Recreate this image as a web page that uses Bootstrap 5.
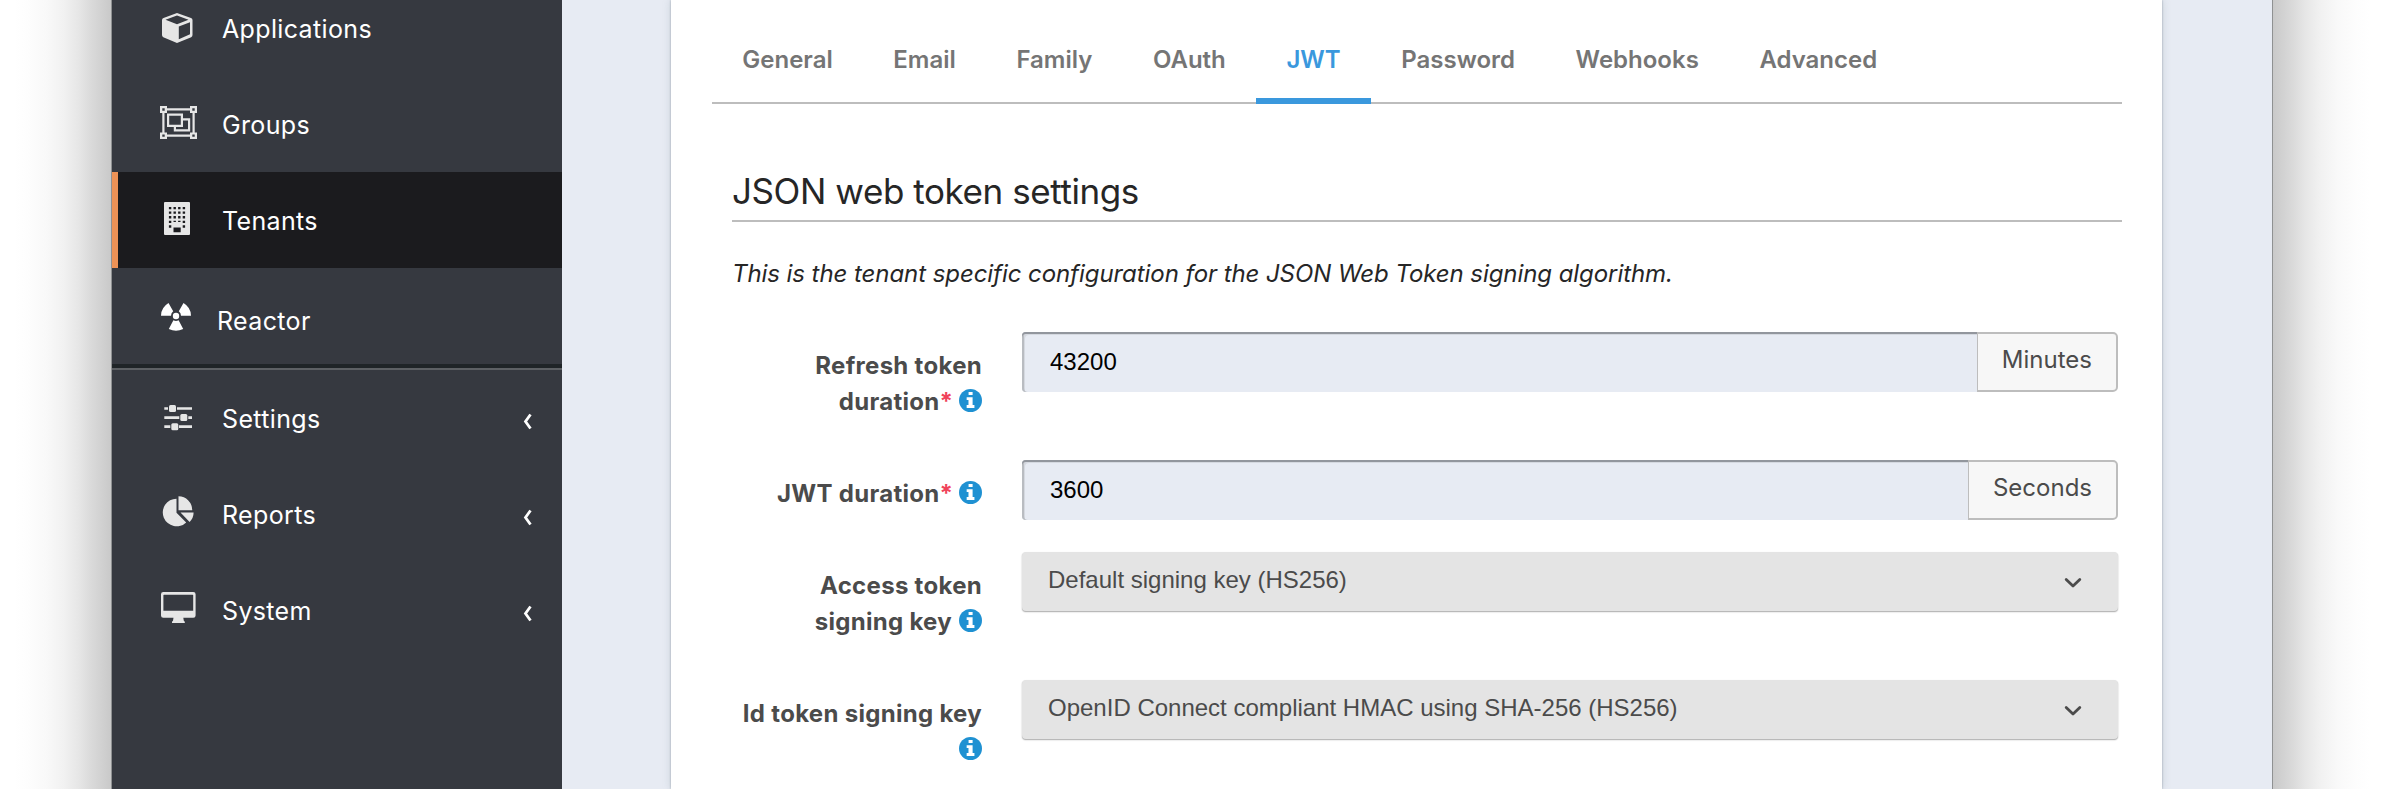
<!DOCTYPE html>
<html lang="en">
<head>
<meta charset="utf-8">
<meta name="viewport" content="width=device-width, initial-scale=1">
<title>Tenants</title>
<link href="https://cdn.jsdelivr.net/npm/bootstrap@5.3.0/dist/css/bootstrap.min.css" rel="stylesheet">
<style>
body{font-family:Inter,"Liberation Sans",sans-serif;font-size:24px;line-height:36px;color:#262626;background:#fff}
.app{height:789px}
.edge{width:112px;background:linear-gradient(to left,#8f9192 0,#8f9192 1px,#c9c9c9 1px,#cfcfcf 8px,#dadada 21px,#e6e6e6 33px,#f1f1f1 48px,#f9f9f9 66px,#fdfdfd 84px,#fff 98px)}
.edge-right{transform:scaleX(-1)}
.side{width:450px;background:#363940}
.side-nav{margin-top:-20px}
.side-link{height:96px;padding:0 27px 0 46px;color:#fff;font-size:25px;letter-spacing:.35px;text-decoration:none}
.side-link:hover{color:#fff}
.side-link svg{width:40px;height:40px;margin-right:24px;fill:#e6e6e6;flex:none}
.side-link .lbl{line-height:96px;padding-top:2px}
.side-link .chev{width:20px;height:24px;margin:8px 0 0;fill:none;stroke:#fff;stroke-width:2.8}
.side-link.active{background:#1b1b1e;border-left:6px solid #ed9256;padding-left:40px}
.side-link.plugin svg{fill:#fff;margin-right:19px}
.side-link.plugin .lbl{padding-top:10px}
.split{height:6px;background:#1f2427;border-bottom:2px solid #5d6064}
.main{background:#e7ebf3;padding:0 110px 0 109px}
.panel{background:#fff;padding:0 40px 0 41px;box-shadow:0 0 2px #9aa3ab,0 0 8px rgba(120,135,150,.28)}
.tabs{border-bottom:2px solid #bdbdbd;height:104px}
.tabs .nav-link{padding:42px 30.3px 20px;color:#757575;font-weight:600;line-height:36px;letter-spacing:0;border-bottom:6px solid transparent;height:104px}
.tabs .nav-link.active{color:#3a98dd;border-color:#3a98dd}
.section{padding-left:20px}
.section h2{margin:65px 0 34px;padding-bottom:7px;font-size:35px;line-height:44px;font-weight:400;letter-spacing:-.42px;border-bottom:2px solid #bdbdbd;color:#262626}
.intro{margin-bottom:40px;letter-spacing:-.07px}
.field{margin-right:4px;gap:40px;height:128px}
.field.short{height:92px}
.field label{width:250px;padding-top:16px;text-align:right;font-weight:700;letter-spacing:.3px;color:#4b4b4b;white-space:nowrap}
.req{color:#f0435a;letter-spacing:-1px}
.info{width:23px;height:23px;margin-left:1px;vertical-align:-2px}
.field .input-group{height:60px;flex:1}
.field .form-control{font:24px "Liberation Sans",sans-serif;color:#000;background:#e7ebf3;border:0;border-radius:4px 0 0 4px;padding:0 27px 0 28px;box-shadow:inset 0 2px #92969d,inset 2px 0 #b9bcc1,inset 3px 3px #d5d9e0}
.field .input-group-text{font-size:24px;line-height:36px;color:#4b4b4b;background:#f7f7f7;border:2px solid #bdbdbd;border-left-width:1px;border-radius:0 5px 5px 0;padding:0 24px 4px;margin-left:0!important}
.picker{height:59px;flex:1;background:#e4e4e4;border:0;border-radius:4px;padding:0 36px 4px 26px;font:24px/36px "Liberation Sans",sans-serif;color:#4b4b4b;box-shadow:0 1px 1px #b4b4b4,0 1px 2px rgba(0,0,0,.15)}
.picker svg{width:18px;height:12px;margin-top:7px;fill:none;stroke:#4b4b4b;stroke-width:2.8;stroke-linecap:round;stroke-linejoin:round}
</style>
</head>
<body class="overflow-hidden">
<svg class="d-none">
  <symbol id="info" viewBox="0 0 24 24"><circle cx="12" cy="12" r="12" fill="#1f91d2"/><path fill="#fff" d="M10 3h4.200v3.200H10zM8 8.500h6.200v8.300h1.900v3H8v-3h1.900v-5.300H8z"/></symbol>
  <symbol id="left" viewBox="0 0 20 24"><path d="M15.500 4.500 10.500 11.500 15.500 18.500"/></symbol>
  <symbol id="down" viewBox="0 0 18 12"><path d="M2.200 2.500 9 9 15.800 2.500"/></symbol>
</svg>
<div class="app d-flex">
  <div class="edge"></div>

  <aside class="side flex-shrink-0 overflow-hidden">
    <nav class="side-nav d-flex flex-column">
      <a class="side-link d-flex align-items-center" href="#">
        <svg viewBox="158 8 40 40"><path fill-rule="evenodd" d="M177 13 191 18q1.500.6 1.500 2v15q0 1.500-1.300 2.200L177 43 163.300 37.200q-1.300-.7-1.300-2.200V20q0-1.400 1.500-2zM177 15.500 165.500 19.700 177 24.200 188.500 19.700zM178.800 26.500V39.300L190 34.200V22.200z"/></svg>
        <span class="lbl">Applications</span>
      </a>
      <a class="side-link d-flex align-items-center" href="#">
        <svg viewBox="158 104 40 40"><path fill-rule="evenodd" d="M160 106h7v2.300h23V106h7v7h-2.300v19.500h2.300v6.500h-7v-2.300h-23v2.300h-7v-6.500h2.300V113H160zM162.300 108.300v2.400h2.400v-2.400zM192.300 108.300v2.400h2.400v-2.400zM162.300 134.500v2.300h2.400v-2.300zM192.300 134.500v2.300h2.400v-2.300zM167 110.500v2.500h-2.500v19.500h2.500v2h23v-2h2.500V113H190v-2.500z"/><path fill-rule="evenodd" d="M167 113.500h16v4.800h7.200v13.200h-16.400v-4.500H167zM169.200 115.700v9.100h11.600v-9.100zM183 120.500V127h-7v2.300h12v-8.800z"/></svg>
        <span class="lbl">Groups</span>
      </a>
      <a class="side-link active d-flex align-items-center" href="#">
        <svg viewBox="158 200 40 40"><rect x="164" y="202" width="26" height="33" rx="1"/><path d="M170.100 207v17.500M174.700 207v15M179.300 207v15M183.900 207v17.500" stroke="#1b1b1e" stroke-width="2.400" stroke-dasharray="2.300 2.250"/><path d="M168.900 225.300h2.400v2.400h-2.400zM182.700 225.300h2.400v2.400h-2.400zM173.500 227.500h7.200v4.800h-7.200z" fill="#1b1b1e"/></svg>
        <span class="lbl">Tenants</span>
      </a>
      <a class="side-link plugin d-flex align-items-center" href="#">
        <svg viewBox="158 296 40 40"><circle cx="176" cy="316" r="3.200"/><path d="M161 315.800Q161 307.500 168.500 303L173.200 311.300Q171 313 171 315.800zM191 315.800Q191 307.500 183.500 303L178.800 311.300Q181 313 181 315.800zM173.400 320.300Q176 321.500 178.600 320.300L183.200 328.900Q176 332.500 168.800 328.900z"/></svg>
        <span class="lbl">Reactor</span>
      </a>
      <div class="split"></div>
      <a class="side-link d-flex align-items-center" href="#">
        <svg viewBox="158 398 40 40"><path d="M164.300 407.200h3.700v2.600h-3.700zM177 407.200h15v2.600h-15zM164.300 416.300h15v2.600h-15zM188.300 416.300h3.700v2.600h-3.700zM164.300 425.300h6v2.600h-6zM179 425.300h13v2.600h-13z"/><rect x="169" y="405" width="7" height="7" rx="1.500"/><rect x="180.300" y="414.100" width="7" height="7" rx="1.500"/><rect x="171.300" y="423.200" width="7" height="7" rx="1.500"/></svg>
        <span class="lbl">Settings</span><svg class="chev ms-auto"><use href="#left"/></svg>
      </a>
      <a class="side-link d-flex align-items-center" href="#">
        <svg viewBox="158 494 40 40"><path d="M176.500 498.700V512.700L186.200 522.400A13.800 13.800 0 1 1 176.500 498.700zM178.500 496.300A13.700 13.700 0 0 1 192.200 510.300H178.500zM180.500 512.500H193.600A13 13 0 0 1 189.600 521.900z"/></svg>
        <span class="lbl">Reports</span><svg class="chev ms-auto"><use href="#left"/></svg>
      </a>
      <a class="side-link d-flex align-items-center" href="#">
        <svg viewBox="158 590 40 40"><path fill-rule="evenodd" d="M163.300 592h30q2.300 0 2.300 2.300v21.200q0 2.300-2.300 2.300h-10l.5 3 1 1v1.200h-12.800v-1.200l1-1 .5-3h-10.200q-2.300 0-2.300-2.300v-21.200q0-2.300 2.300-2.300zM164 594.700q-.6 0-.6.600v15.500h29.800v-15.500q0-.6-.6-.6z"/></svg>
        <span class="lbl">System</span><svg class="chev ms-auto"><use href="#left"/></svg>
      </a>
    </nav>
  </aside>

  <main class="main flex-grow-1 overflow-hidden">
    <div class="panel h-100">
      <ul class="nav tabs flex-nowrap">
        <li class="nav-item"><a class="nav-link" href="#">General</a></li>
        <li class="nav-item"><a class="nav-link" href="#">Email</a></li>
        <li class="nav-item"><a class="nav-link" href="#">Family</a></li>
        <li class="nav-item"><a class="nav-link" href="#">OAuth</a></li>
        <li class="nav-item"><a class="nav-link active" href="#">JWT</a></li>
        <li class="nav-item"><a class="nav-link" href="#">Password</a></li>
        <li class="nav-item"><a class="nav-link" href="#">Webhooks</a></li>
        <li class="nav-item"><a class="nav-link" href="#">Advanced</a></li>
      </ul>
      <section class="section">
        <h2>JSON web token settings</h2>
        <p class="intro fst-italic">This is the tenant specific configuration for the JSON Web Token signing algorithm.</p>
        <form>
          <div class="field d-flex align-items-start">
            <label for="refresh">Refresh token<br>duration<span class="req">*</span> <svg class="info"><use href="#info"/></svg></label>
            <div class="input-group"><input id="refresh" class="form-control" value="43200"><span class="input-group-text">Minutes</span></div>
          </div>
          <div class="field short d-flex align-items-start">
            <label for="jwt">JWT duration<span class="req">*</span> <svg class="info"><use href="#info"/></svg></label>
            <div class="input-group"><input id="jwt" class="form-control" value="3600"><span class="input-group-text">Seconds</span></div>
          </div>
          <div class="field d-flex align-items-start">
            <label>Access token<br>signing key <svg class="info"><use href="#info"/></svg></label>
            <button type="button" class="picker d-flex align-items-center justify-content-between">Default signing key (HS256)<svg><use href="#down"/></svg></button>
          </div>
          <div class="field d-flex align-items-start">
            <label>Id token signing key<br><svg class="info"><use href="#info"/></svg></label>
            <button type="button" class="picker d-flex align-items-center justify-content-between">OpenID Connect compliant HMAC using SHA-256 (HS256)<svg><use href="#down"/></svg></button>
          </div>
        </form>
      </section>
    </div>
  </main>

  <div class="edge edge-right"></div>
</div>
<script src="https://cdn.jsdelivr.net/npm/bootstrap@5.3.0/dist/js/bootstrap.bundle.min.js"></script>
</body>
</html>
